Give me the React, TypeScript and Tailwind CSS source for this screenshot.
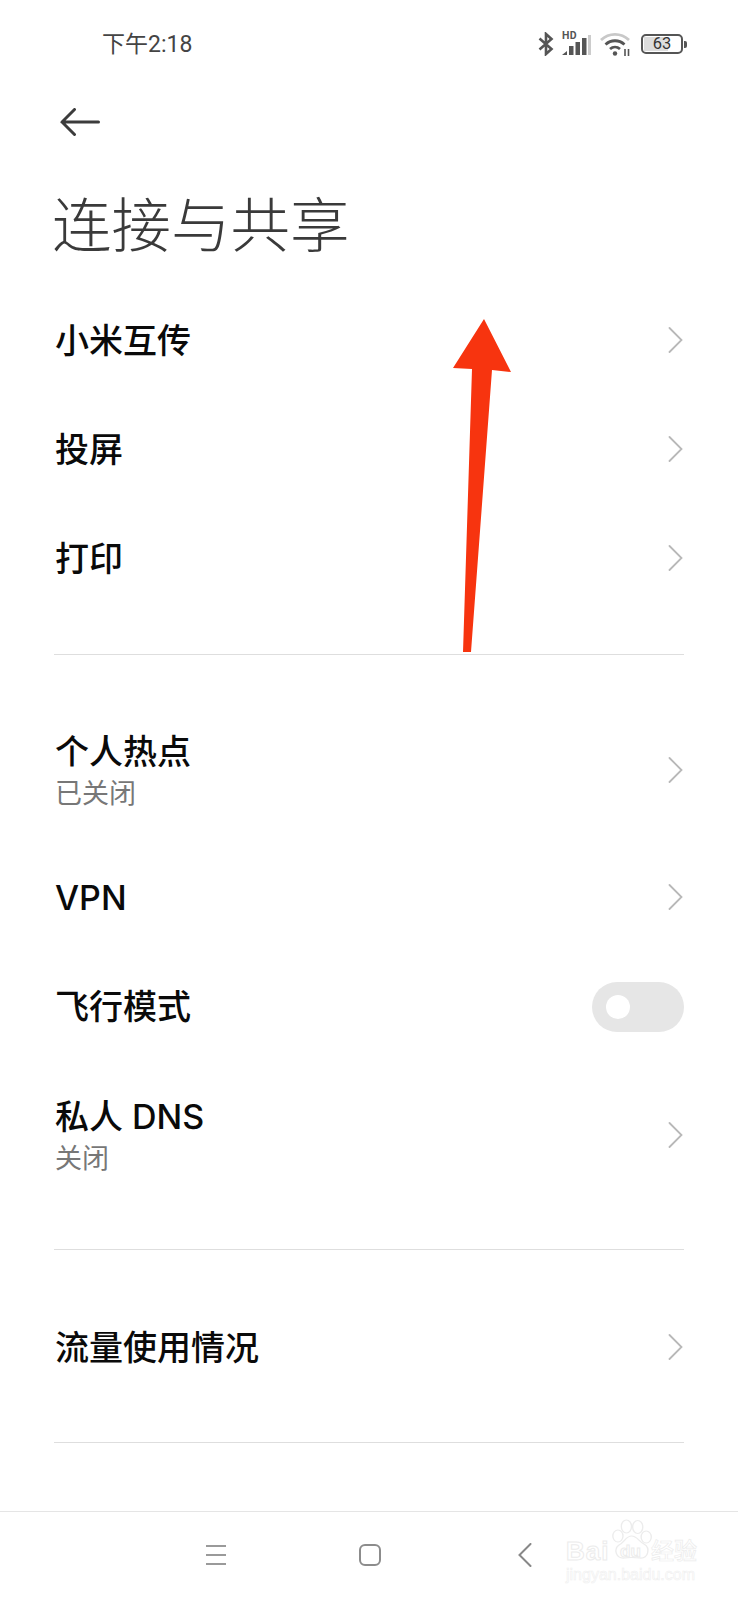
const SANS = "font-['Inter','Noto_Sans_CJK_SC',sans-serif]";

function Divider({ className = '' }: { className?: string }) {
  return <div className={`mx-[54px] h-px bg-[#dedede] ${className}`} />;
}

function Chevron({ lifted }: { lifted: boolean }) {
  return (
    <svg className={`ml-auto mr-[55px] ${lifted ? 'mb-[2px]' : ''}`} width="15" height="26" viewBox="0 0 15 26" fill="none" stroke="#b8b8b8" strokeWidth="1.8" strokeLinecap="round">
      <path d="M1.5 1 13.5 13 1.5 25" />
    </svg>
  );
}

function Row({ title, sub }: { title: string; sub?: string }) {
  return (
    <div className={`flex items-center pl-[55px] ${sub ? 'h-[147px]' : 'h-[109px]'}`}>
      <div className={`flex flex-col ${sub ? 'pt-[8px]' : ''}`}>
        <span className="text-[34px] leading-[40px] font-medium text-[#0a0a0a]">{title}</span>
        {sub && <span className="text-[27px] leading-[44px] text-[#777777]">{sub}</span>}
      </div>
      <Chevron lifted={!sub} />
    </div>
  );
}

function StatusIcons() {
  return (
    <div className="ml-auto mr-[51px] flex items-center text-[#555555] font-['Roboto',sans-serif]">
      {/* bluetooth */}
      <svg width="16" height="24" viewBox="0 0 16 24" fill="none" stroke="#555555" strokeWidth="2.6">
        <path d="M1.5 6.5 13.5 17 8 22V2L13.5 7 1.5 17.5" />
      </svg>
      {/* signal */}
      <div className="relative ml-[8px] w-[29px] h-[22px]">
        <span className="absolute left-0 top-[-2px] text-[10.5px] leading-[10px] font-bold tracking-[0.3px]">HD</span>
        <svg className="absolute left-0 bottom-0" width="29" height="20" viewBox="0 0 29 20">
          <path d="M0 20l5-4v4z" fill="#555555" />
          <rect x="7" y="11" width="4.5" height="9" fill="#555555" />
          <rect x="13.5" y="7" width="4.5" height="13" fill="#555555" />
          <rect x="20" y="3" width="4.5" height="17" fill="#555555" />
          <rect x="26" y="0" width="3" height="20" fill="#cccccc" />
        </svg>
      </div>
      {/* wifi */}
      <svg className="ml-[9px]" width="30" height="24" viewBox="0 0 30 24" fill="none">
        <path d="M1 8C9 .5 21 .5 29 8" stroke="#c8c8c8" strokeWidth="2.8" />
        <path d="M5.5 12.5C11 7.5 19 7.5 24.5 12.5" stroke="#555555" strokeWidth="2.8" />
        <path d="M10 17c3-2.6 7-2.6 10 0" stroke="#555555" strokeWidth="2.8" />
        <circle cx="15" cy="21.5" r="2.2" fill="#555555" />
        <path d="M25 17v7M28.5 17v7" stroke="#555555" strokeWidth="1.6" />
      </svg>
      {/* battery */}
      <div className="flex items-center ml-[11px]">
        <div className="relative w-[42px] h-[20px] rounded-[5px] border-[2.5px] border-[#555555] flex items-center justify-center overflow-hidden">
          <div className="absolute left-[1px] top-[1px] bottom-[1px] w-[24px] bg-[#dddddd]" />
          <span className="relative text-[16.5px] leading-none text-[#333333]">63</span>
        </div>
        <div className="ml-[1px] w-[3px] h-[7px] bg-[#555555] rounded-r-[2px]" />
      </div>
    </div>
  );
}

function Watermark() {
  return (
    <div className="absolute left-[566px] top-[1519px] w-[134px] h-[64px] text-white [-webkit-text-stroke:1px_#ececec]">
      <svg className="absolute left-[44px] top-0" width="43" height="42" viewBox="0 0 38 42" preserveAspectRatio="none" fill="none" stroke="#ececec" strokeWidth="1.2">
        <ellipse cx="7" cy="17" rx="4.5" ry="6" />
        <ellipse cx="14.5" cy="7.5" rx="4.5" ry="6.5" />
        <ellipse cx="24.5" cy="8" rx="4.5" ry="6.5" />
        <ellipse cx="32" cy="18" rx="4.5" ry="6" />
        <path d="M19 17c5 0 6 5 11 8 6 4 4 15-4 14-4-.5-9-.8-13 0-8 1-10-9-5-13 5-3 6-9 11-9z" />
      </svg>
      <span className="absolute left-0 top-[19px] font-['Liberation_Sans',sans-serif] text-[26px] leading-[26px] tracking-[1px] font-bold">Bai</span>
      <span className="absolute left-[54px] top-[24px] font-['Liberation_Sans',sans-serif] text-[17px] leading-[18px] font-bold">du</span>
      <span className="absolute left-[85px] top-[20px] text-[23px] leading-[24px] font-medium [-webkit-text-stroke:0.7px_#ececec]">经验</span>
      <span className="absolute left-0 top-[48px] font-['Liberation_Sans',sans-serif] text-[16px] leading-[16px] whitespace-nowrap [-webkit-text-stroke:0.6px_#efefef]">jingyan.baidu.com</span>
    </div>
  );
}

export default function App() {
  return (
    <div className={`relative w-[738px] h-[1600px] overflow-hidden bg-white ${SANS}`}>
      <div className="flex items-center h-[88px] pl-[102px]">
        <span className="pt-[2px] font-['Roboto','Noto_Sans_CJK_SC',sans-serif] text-[23px] text-[#444444]">下午2:18</span>
        <StatusIcons />
      </div>

      <div className="flex items-center h-[68px] pl-[60px]">
        <svg width="40" height="28" viewBox="0 0 40 28" fill="none" stroke="#3c3c3c" strokeWidth="3" strokeLinecap="round">
          <path d="M38.5 14H2M14.5 1.5 2 14l12.5 12.5" />
        </svg>
      </div>

      <div className="flex items-center h-[130px] pl-[52px] pt-[10px]">
        <h1 className="text-[59.5px] font-light leading-none text-[#3a3a3a]">连接与共享</h1>
      </div>

      <Row title="小米互传" />
      <Row title="投屏" />
      <Row title="打印" />
      <Divider className="mt-[41px]" />

      <div className="mt-[41px]">
        <Row title="个人热点" sub="已关闭" />
      </div>
      <Row title="VPN" />
      <div className="flex items-center h-[109px] pl-[55px]">
        <span className="text-[34px] leading-[40px] font-medium text-[#0a0a0a]">飞行模式</span>
        <div className="ml-auto mr-[54px] flex items-center w-[92px] h-[50px] rounded-full bg-[#e6e6e6] pl-[14px]">
          <div className="size-[24px] rounded-full bg-white" />
        </div>
      </div>
      <Row title="私人 DNS" sub="关闭" />
      <Divider className="mt-[41px]" />

      <div className="mt-[43px]">
        <Row title="流量使用情况" />
      </div>
      <Divider className="mt-[40px]" />

      {/* nav bar */}
      <div className="absolute bottom-0 left-0 right-0 h-[89px] border-t border-[#e5e5e5]">
        <div className="flex items-center h-full pl-[206px] pb-[2px]">
          <svg width="20" height="20" viewBox="0 0 20 20" stroke="#9a9a9a" strokeWidth="2" fill="none">
            <path d="M0 1h20M0 10h20M0 19h20" />
          </svg>
          <div className="ml-[133px] size-[22px] rounded-[6px] border-[2.5px] border-[#8c8c8c]" />
          <svg className="ml-[137px]" width="14" height="24" viewBox="0 0 14 24" fill="none" stroke="#888888" strokeWidth="2" strokeLinecap="round">
            <path d="M12.5 1 1.5 12l11 11" />
          </svg>
        </div>
      </div>

      {/* annotation arrow */}
      <svg className="absolute left-[452px] top-[319px]" width="62" height="334" viewBox="0 0 62 334">
        <path d="M32 0 59 53 40 51 19 333 11 333 20 50 1 49z" fill="#f7340f" />
      </svg>

      <Watermark />
    </div>
  );
}
